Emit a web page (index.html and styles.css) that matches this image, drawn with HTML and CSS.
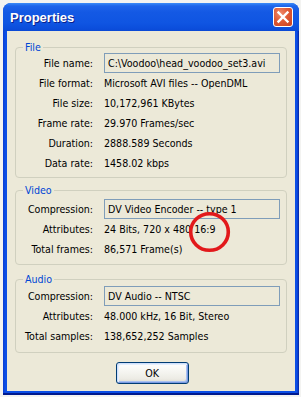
FILE: index.html
```html
<!DOCTYPE html>
<html>
<head>
<meta charset="utf-8">
<link rel="stylesheet" href="styles.css">
</head>
<body>
<div class="window">
  <div class="titlebar">
    <span class="title">Properties</span>
    <div class="close">
      <svg width="20" height="20" viewBox="0 0 20 20"><path d="M5.5 5.5 L14.5 14.5 M14.5 5.5 L5.5 14.5" stroke="#fff" stroke-width="2.4" stroke-linecap="square"/></svg>
    </div>
  </div>
  <div class="client">
    <fieldset class="group file">
      <legend>File</legend>
      <div class="rows">
        <div class="label">File name:</div><div class="value box">C:\Voodoo\head_voodoo_set3.avi</div>
        <div class="label">File format:</div><div class="value">Microsoft AVI files -- OpenDML</div>
        <div class="label">File size:</div><div class="value">10,172,961 KBytes</div>
        <div class="label">Frame rate:</div><div class="value">29.970 Frames/sec</div>
        <div class="label">Duration:</div><div class="value">2888.589 Seconds</div>
        <div class="label">Data rate:</div><div class="value">1458.02 kbps</div>
      </div>
    </fieldset>
    <fieldset class="group video">
      <legend>Video</legend>
      <div class="rows">
        <div class="label">Compression:</div><div class="value box">DV Video Encoder -- type 1</div>
        <div class="label">Attributes:</div><div class="value">24 Bits, 720 x 480 16:9</div>
        <div class="label">Total frames:</div><div class="value">86,571 Frame(s)</div>
      </div>
    </fieldset>
    <fieldset class="group audio">
      <legend>Audio</legend>
      <div class="rows">
        <div class="label">Compression:</div><div class="value box">DV Audio -- NTSC</div>
        <div class="label">Attributes:</div><div class="value">48.000 kHz, 16 Bit, Stereo</div>
        <div class="label">Total samples:</div><div class="value">138,652,252 Samples</div>
      </div>
    </fieldset>
    <div class="buttons"><div class="ok">OK</div></div>
  </div>
</div>
<svg class="mark" width="46" height="44" viewBox="0 0 46 44"><ellipse cx="22.5" cy="22" rx="18.8" ry="18.3" fill="none" stroke="#e2191b" stroke-width="3.6"/></svg>
</body>
</html>
```

FILE: styles.css
```css
html, body {
  margin: 0;
  padding: 0;
}
body {
  width: 301px;
  height: 397px;
  overflow: hidden;
  background: #f3f3f1;
  padding: 3px 0 0 3px;
  box-sizing: border-box;
  position: relative;
  font-family: "DejaVu Sans Condensed", "Liberation Sans", Arial, sans-serif;
  font-size: 10.6px;
  color: #000;
}
.window {
  width: 296px;
  height: 392px;
  border-radius: 8px 8px 0 0;
  background: linear-gradient(to right, #0a3bd0 0, #0b4ee6 2px, #0b4ee6 calc(100% - 2px), #06209a 100%);
  display: flex;
  flex-direction: column;
  box-shadow: inset 0 -2px 0 #001a8e;
}
.titlebar {
  height: 28px;
  flex: none;
  display: flex;
  align-items: center;
  justify-content: space-between;
  padding: 0 6px 0 7px;
  border-radius: 8px 8px 0 0;
  background: linear-gradient(to bottom, #3b8cf8 0, #1d64ea 3px, #1459e4 9px, #0f55e2 20px, #0b4ddb 26px, #0a48d4 28px);
}
.title {
  font-family: "Liberation Sans", Arial, sans-serif;
  font-weight: bold;
  font-size: 13px;
  color: #fff;
  text-shadow: 1px 1px 0 #0a1f8a;
}
.close {
  width: 20px;
  height: 20px;
  box-sizing: border-box;
  border: 1px solid #fff;
  border-radius: 3px;
  background: radial-gradient(circle at 35% 30%, #f08a6c 0, #e05a36 45%, #c9401f 100%);
}
.close svg {
  display: block;
  margin: -1px;
}
.client {
  flex: 1;
  margin: 0 4px 4px 4px;
  background: #ece9d8;
  padding-top: 9px;
  display: flex;
  flex-direction: column;
}
.group {
  margin: 0 8px;
  padding: 0 6px 4px 0;
  border: 1px solid #d0d0bf;
  border-radius: 4px;
  min-inline-size: 0;
}
.group legend {
  margin-left: 7px;
  padding: 0 2px;
  line-height: 14px;
  color: #0046d5;
}
.rows {
  display: grid;
  grid-template-columns: 77px 1fr;
  column-gap: 11px;
  grid-auto-rows: 20px;
  align-items: center;
}
.file .rows { margin-top: -1px; }
.video { margin-top: 5px; padding-bottom: 5px; }
.video .rows { margin-top: 2px; }
.audio { margin-top: 7px; padding-bottom: 6px; }
.audio .rows { margin-top: 0; }
.label {
  text-align: right;
  white-space: nowrap;
}
.value {
  white-space: nowrap;
}
.box {
  height: 20px;
  box-sizing: border-box;
  border: 1px solid #7f9db9;
  padding: 0 3px;
  line-height: 18px;
  background: #ece9d8;
}
.buttons {
  display: flex;
  justify-content: center;
  margin-top: 9px;
  padding-left: 2px;
}
.ok {
  width: 73px;
  height: 22px;
  box-sizing: border-box;
  border: 1px solid #003c74;
  border-radius: 3px;
  background: linear-gradient(to bottom, #ffffff 0, #f6f6f2 40%, #ecebe4 80%, #d9d6cb 100%);
  box-shadow: inset 1px 1px 0 #cfe0fb, inset -1px -1px 0 #7a9ae2, inset 2px 2px 0 #e4eefd, inset -2px -2px 0 #a8c1f0;
  text-align: center;
  line-height: 20px;
}
.mark {
  position: absolute;
  left: 187px;
  top: 210px;
}
```
